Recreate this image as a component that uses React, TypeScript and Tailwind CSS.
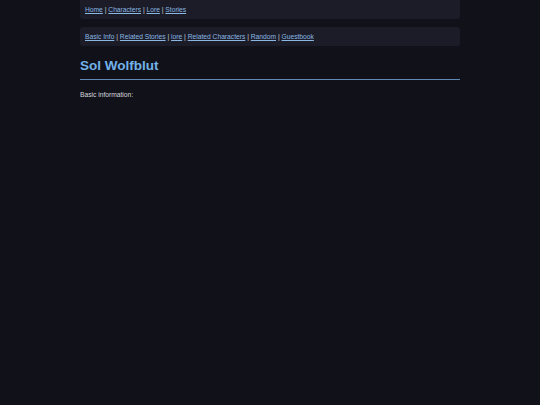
const navMain = ["Home", "Characters", "Lore", "Stories"];
const navSub = ["Basic Info", "Related Stories", "lore", "Related Characters", "Random", "Guestbook"];

function NavBar({ items, className }: { items: string[]; className: string }) {
  return (
    <div className={`h-[19px] bg-[#1b1c28] px-[5px] text-[6.7px] leading-[19px] text-[#c8ccd4] ${className}`}>
      {items.map((item, i) => (
        <span key={item}>
          {i > 0 && "\u00a0|\u00a0"}
          <a href="#" className="text-[#8ab8e2] underline">
            {item}
          </a>
        </span>
      ))}
    </div>
  );
}

export default function App() {
  return (
    <div className="min-h-screen bg-[#11111a] font-['Liberation_Sans',Arial,sans-serif]">
      <div className="mx-auto w-[380px]">
        <NavBar items={navMain} className="rounded-b-[3px]" />
        <NavBar items={navSub} className="mt-[8px] rounded-[3px]" />
        <h1 className="mt-[12px] border-b-[1.5px] border-[#5f88b4] pb-[5px] text-[13.5px] font-bold leading-[15.5px] text-[#72b2e8]">
          Sol Wolfblut
        </h1>
        <p className="mt-[10px] text-[6.7px] text-[#d6d8de]">Basic information:</p>
      </div>
    </div>
  );
}
